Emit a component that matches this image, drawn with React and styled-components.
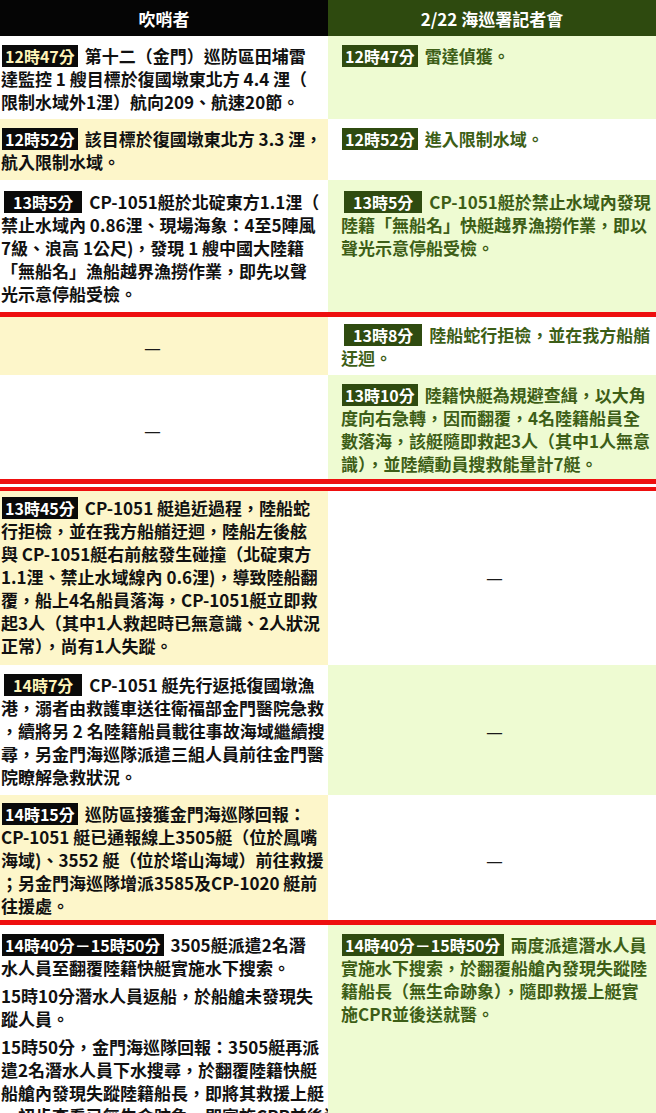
import React from "react";
import styled, { createGlobalStyle } from "styled-components";

const GlobalStyle = createGlobalStyle`
  html, body {
    margin: 0;
    padding: 0;
    background: #ffffff;
  }
  body {
    font-family: "Noto Sans CJK TC", "Noto Sans", sans-serif;
  }
`;

// 每一列：左 = 吹哨者，右 = 海巡署記者會；沒有 text 代表「—」
const rows = [
  {
    pad: [8, 6],
    left: {
      tone: "white",
      badge: "12時47分",
      cream: true,
      text: `第十二（金門）巡防區田埔雷
達監控 1 艘目標於復國墩東北方 4.4 浬（
限制水域外1浬）航向209、航速20節。`,
    },
    right: { tone: "green", badge: "12時47分", text: "雷達偵獲。" },
  },
  {
    pad: [8, 7],
    left: {
      tone: "yellow",
      badge: "12時52分",
      text: `該目標於復國墩東北方 3.3 浬，
航入限制水域。`,
    },
    right: { tone: "white", badge: "12時52分", text: "進入限制水域。" },
  },
  {
    pad: [10, 7],
    left: {
      tone: "white",
      badge: "13時5分",
      wide: true,
      text: `CP-1051艇於北碇東方1.1浬（
禁止水域內 0.86浬、現場海象：4至5陣風
7級、浪高 1公尺)，發現 1 艘中國大陸籍
「無船名」漁船越界漁撈作業，即先以聲
光示意停船受檢。`,
    },
    right: {
      tone: "green",
      badge: "13時5分",
      wide: true,
      text: `CP-1051艇於禁止水域內發現
陸籍「無船名」快艇越界漁撈作業，即以
聲光示意停船受檢。`,
    },
    divider: "single",
  },
  {
    pad: [6, 6],
    left: { tone: "yellow" },
    right: {
      tone: "white",
      badge: "13時8分",
      wide: true,
      text: `陸船蛇行拒檢，並在我方船艏
迂迴。`,
    },
  },
  {
    pad: [8, 4],
    left: { tone: "white" },
    right: {
      tone: "green",
      badge: "13時10分",
      text: `陸籍快艇為規避查緝，以大角
度向右急轉，因而翻覆，4名陸籍船員全
數落海，該艇隨即救起3人（其中1人無意
識），並陸續動員搜救能量計7艇。`,
    },
    divider: "double",
  },
  {
    pad: [5, 8],
    left: {
      tone: "yellow",
      badge: "13時45分",
      text: `CP-1051 艇追近過程，陸船蛇
行拒檢，並在我方船艏迂迴，陸船左後舷
與 CP-1051艇右前舷發生碰撞（北碇東方
1.1浬、禁止水域線內 0.6浬)，導致陸船翻
覆，船上4名船員落海，CP-1051艇立即救
起3人（其中1人救起時已無意識、2人狀況
正常），尚有1人失蹤。`,
    },
    right: { tone: "white" },
  },
  {
    pad: [8, 7],
    left: {
      tone: "white",
      badge: "14時7分",
      cream: true,
      wide: true,
      text: `CP-1051 艇先行返抵復國墩漁
港，溺者由救護車送往衛福部金門醫院急救
，續將另 2 名陸籍船員載往事故海域繼續搜
尋，另金門海巡隊派遣三組人員前往金門醫
院瞭解急救狀況。`,
    },
    right: { tone: "green" },
  },
  {
    pad: [7, 3],
    left: {
      tone: "yellow",
      badge: "14時15分",
      text: `巡防區接獲金門海巡隊回報：
CP-1051 艇已通報線上3505艇（位於鳳嘴
海域)、3552 艇（位於塔山海域）前往救援
；另金門海巡隊增派3585及CP-1020 艇前
往援處。`,
    },
    right: { tone: "white" },
    divider: "single",
  },
  {
    pad: [8, 8],
    left: {
      tone: "white",
      badge: "14時40分－15時50分",
      text: `3505艇派遣2名潛
水人員至翻覆陸籍快艇實施水下搜索。`,
      more: [
        `15時10分潛水人員返船，於船艙未發現失
蹤人員。`,
        `15時50分，金門海巡隊回報：3505艇再派
遣2名潛水人員下水搜尋，於翻覆陸籍快艇
船艙內發現失蹤陸籍船長，即將其救援上艇
，初步查看已無生命跡象，即實施CPR並後送
就醫。`,
      ],
    },
    right: {
      tone: "green",
      badge: "14時40分－15時50分",
      text: `兩度派遣潛水人員
實施水下搜索，於翻覆船艙內發現失蹤陸
籍船長（無生命跡象），隨即救援上艇實
施CPR並後送就醫。`,
    },
  },
];

function CellContent({ side, data }) {
  if (!data.text) {
    return (
      <Empty $side={side}>
        <Dash>—</Dash>
      </Empty>
    );
  }
  const [first, ...rest] = data.text.split("\n");
  return (
    <>
      <Para $side={side}>
        <Lead>
          <Badge $side={side} $cream={data.cream} $wide={data.wide}>
            {data.badge}
          </Badge>
          <span>{first}</span>
        </Lead>
        {rest.join("\n")}
      </Para>
      {(data.more || []).map((t) => (
        <Para key={t} $side={side} $gap>
          {t}
        </Para>
      ))}
    </>
  );
}

export default function App() {
  return (
    <>
      <GlobalStyle />
      <Table>
        <HeadRow>
          <HeadCell $side="left">吹哨者</HeadCell>
          <HeadCell $side="right">2/22 海巡署記者會</HeadCell>
        </HeadRow>

        {rows.map((row, i) => (
          <React.Fragment key={i}>
            <Row>
              <Cell $side="left" $tone={row.left.tone} $pad={row.pad}>
                <CellContent side="left" data={row.left} />
              </Cell>
              <Cell $side="right" $tone={row.right.tone} $pad={row.pad}>
                <CellContent side="right" data={row.right} />
              </Cell>
            </Row>
            {row.divider && <Divider $double={row.divider === "double"} />}
          </React.Fragment>
        ))}
      </Table>
    </>
  );
}

/* ===== 表格 ===== */

const tones = {
  white: "#ffffff",
  yellow: "#fdf6ca",
  green: "#eefbd2",
};

const Table = styled.div`
  width: 656px;
  display: flex;
  flex-direction: column;
  overflow: hidden;
`;

const HeadRow = styled.div`
  display: grid;
  grid-template-columns: 328px 328px;
  height: 36px;
`;

const HeadCell = styled.div`
  display: flex;
  align-items: center;
  justify-content: center;
  background: ${(p) => (p.$side === "left" ? "#050505" : "#2e4a0f")};
  color: #ffffff;
  font-size: 17px;
  font-weight: 700;
`;

const Row = styled.div`
  display: grid;
  grid-template-columns: 328px 328px;
`;

const Cell = styled.div`
  background: ${(p) => tones[p.$tone]};
  padding: ${(p) => p.$pad[0]}px 0 ${(p) => p.$pad[1]}px
    ${(p) => (p.$side === "left" ? "1px" : "13px")};
  display: flex;
  flex-direction: column;
`;

const Para = styled.div`
  margin: ${(p) => (p.$gap ? "5px 0 0" : "0")};
  white-space: pre;
  font-size: 17px;
  line-height: 23px;
  font-weight: 700;
  color: ${(p) => (p.$side === "left" ? "#111111" : "#3d5e17")};
`;

const Lead = styled.div`
  display: flex;
  align-items: center;
  height: 23px;
`;

const Badge = styled.span`
  height: 22px;
  line-height: 22px;
  padding: ${(p) => (p.$wide ? "0 9px" : "0 3px")};
  margin: 0 7px 0 ${(p) => (p.$wide ? "3px" : "1px")};
  font-size: 16px;
  font-weight: 700;
  background: ${(p) => (p.$side === "left" ? "#0a0a0a" : "#2f4b10")};
  color: ${(p) => (p.$cream ? "#fff3b8" : "#ffffff")};
`;

const Empty = styled.div`
  flex: 1;
  min-height: 44px;
  display: flex;
  align-items: center;
  justify-content: center;
  padding-right: ${(p) => (p.$side === "left" ? "24px" : "8px")};
`;

const Dash = styled.span`
  font-size: 19px;
  font-weight: 400;
  color: #1a1a1a;
`;

const Divider = styled.div`
  box-sizing: border-box;
  height: ${(p) => (p.$double ? "12px" : "5px")};
  background: #ffffff;
  border-top: 5px solid #ee0f0f;
  border-bottom: ${(p) => (p.$double ? "4px solid #ee0f0f" : "none")};
`;
